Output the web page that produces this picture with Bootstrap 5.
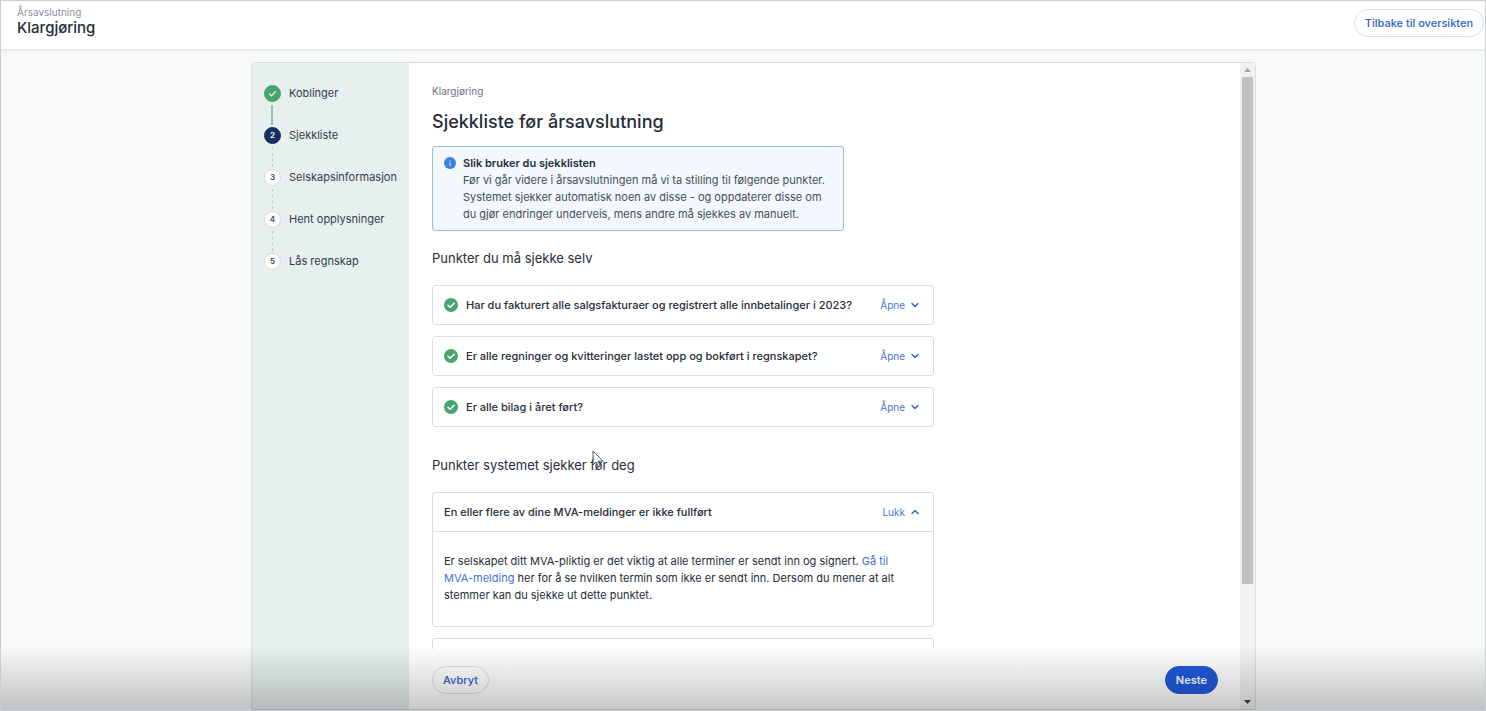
<!DOCTYPE html>
<html lang="nb">
<head>
<meta charset="utf-8">
<meta name="viewport" content="width=device-width, initial-scale=1">
<title>Klargjøring – Årsavslutning</title>
<link href="https://cdn.jsdelivr.net/npm/bootstrap@5.3.0/dist/css/bootstrap.min.css" rel="stylesheet">
<style>
  :root { --ink: #262d38; --line: #dcdfe2; --blue: #2f62c9; --green: #4aa472; }
  body { font-family: Inter, "Liberation Sans", sans-serif; font-size: 11px; line-height: 17px; color: var(--ink); background: #f6f8fa; }
  .app-frame { height: 100vh; border: 1px solid #c9ced1; }
  .topbar { padding: 4px 1px 12px 16px; border-bottom: 2px solid #e9ebee; }
  .topbar-kicker { font-size: 10px; line-height: 15px; color: #8b9199; }
  .topbar h1 { font-size: 15px; line-height: 16px; font-weight: 500; }
  .btn-pill { --bs-btn-font-size: 11px; --bs-btn-font-weight: 500; --bs-btn-line-height: 16px; --bs-btn-padding-y: 5px; --bs-btn-padding-x: 10px; --bs-btn-border-radius: 14px; --bs-btn-border-color: #dfe0e6; --bs-btn-color: var(--blue); }
  .btn-next { --bs-btn-bg: #2159dc; --bs-btn-border-color: #2159dc; --bs-btn-color: #fff; --bs-btn-font-weight: 600; }
  .wizard-wrap { padding: 11px 229px 0 250px; }
  .wizard { border: 1px solid #d9dee1; border-radius: 4px 4px 0 0; }
  .steps { width: 157px; background: #e7f0ef; padding: 22px 0 0 12px; }
  .step { height: 42px; gap: 8px; position: relative; }
  .step-dot { width: 17px; height: 17px; border-radius: 50%; background: #fff; border: 1px solid #d4dbd9; font-size: 8px; line-height: 15px; font-weight: 600; color: #444b52; }
  .step-done .step-dot { background: var(--green); border-color: var(--green); }
  .step-current .step-dot { background: #16305f; border-color: #16305f; color: #fff; }
  .step:not(:last-child)::after { content: ""; position: absolute; left: 8px; top: 20px; height: 20px; border-left: 1px dashed #c6cdcb; }
  .step-done:not(:last-child)::after { border-left: 2px solid #94c5ac; left: 7px; }
  .step-label { color: #353d46; }
  .pane-scroll { padding: 20px 23px 0; flex: 1 1 0; }
  .pane-inner { max-width: 502px; }
  .crumb { font-size: 10px; line-height: 16px; color: #6c727a; }
  .pane-scroll h2 { font-size: 18px; line-height: 24px; font-weight: 500; margin: 11px 0 12px; }
  .info-box { max-width: 412px; border: 1px solid #9dbedc; border-radius: 3px; background: #f2f8fe; padding: 8px 11px 7px; gap: 7px; }
  .info-box p { color: #474e56; }
  .info-box svg { margin-top: 2px; }
  .pane-scroll h3 { font-size: 13px; line-height: 20px; font-weight: 400; margin: 17px 0; }
  .pane-scroll h3.h3-later { margin: 28px 0 17px; }
  .check-card { border: 1px solid var(--line); border-radius: 3px; background: #fff; margin-bottom: 11px; }
  .check-head { height: 38px; padding: 0 14px 0 11px; font-weight: 500; }
  .check-text { padding: 21px 26px 22px 11px; border-top: 1px solid var(--line); }
  .check-text a { color: #3f70d6; }
  .toggle { font-size: 10px; line-height: 16px; color: #4a74d0; gap: 6px; --bs-btn-padding-x: 0; --bs-btn-padding-y: 0; --bs-btn-border-width: 0; }
  .pane-foot { padding: 17px 22px 15px 23px; }
  .rail { width: 15px; background: #f1f1f1; padding: 0 2px; }
  .rail-cap { height: 14px; }
  .rail-thumb { background: #c1c1c1; height: 82%; }
  .shade { height: 64px; background: linear-gradient(rgba(0,0,0,0), rgba(0,0,0,.22)); pointer-events: none; }
  .pointer { left: 160px; top: -5px; }
</style>
</head>
<body>
<svg class="d-none">
  <symbol id="ok" viewBox="0 0 14 14"><circle cx="7" cy="7" r="7" fill="#4aa472"/><path d="M4 7.200l2.100 2.100L10.200 5.200" fill="none" stroke="#fff" stroke-width="1.500" stroke-linecap="round" stroke-linejoin="round"/></symbol>
  <symbol id="down" viewBox="0 0 8 8"><path d="M1 2.500l3 3 3-3" fill="none" stroke="#3562bd" stroke-width="1.400" stroke-linecap="round" stroke-linejoin="round"/></symbol>
  <symbol id="up" viewBox="0 0 8 8"><path d="M1 5.500l3-3 3 3" fill="none" stroke="#3562bd" stroke-width="1.400" stroke-linecap="round" stroke-linejoin="round"/></symbol>
</svg>
<div class="app-frame d-flex flex-column overflow-hidden position-relative">
  <header class="topbar bg-white d-flex justify-content-between align-items-start">
    <div>
      <div class="topbar-kicker">Årsavslutning</div>
      <h1 class="mb-0">Klargjøring</h1>
    </div>
    <button type="button" class="btn btn-pill bg-white mt-1">Tilbake til oversikten</button>
  </header>

  <main class="wizard-wrap flex-grow-1 d-flex overflow-hidden">
    <div class="wizard flex-grow-1 d-flex bg-white overflow-hidden">
      <ol class="steps list-unstyled mb-0 flex-shrink-0">
        <li class="step step-done d-flex align-items-start">
          <span class="step-dot text-center"><svg class="d-block" width="15" height="15" viewBox="0 0 15 15" aria-hidden="true"><path d="M4.500 7.800l2 2 4-4.200" fill="none" stroke="#fff" stroke-width="1.200" stroke-linecap="round" stroke-linejoin="round"/></svg></span>
          <span class="step-label">Koblinger</span></li>
        <li class="step step-current d-flex align-items-start" aria-current="step"><span class="step-dot text-center">2</span><span class="step-label">Sjekkliste</span></li>
        <li class="step d-flex align-items-start"><span class="step-dot text-center">3</span><span class="step-label">Selskapsinformasjon</span></li>
        <li class="step d-flex align-items-start"><span class="step-dot text-center">4</span><span class="step-label">Hent opplysninger</span></li>
        <li class="step d-flex align-items-start"><span class="step-dot text-center">5</span><span class="step-label">Lås regnskap</span></li>
      </ol>

      <section class="flex-grow-1 d-flex flex-column">
        <div class="pane-scroll overflow-hidden">
          <div class="pane-inner">
            <div class="crumb">Klargjøring</div>
            <h2>Sjekkliste før årsavslutning</h2>
            <div class="info-box d-flex align-items-start">
              <svg class="flex-shrink-0" width="12" height="12" viewBox="0 0 12 12" aria-hidden="true"><circle cx="6" cy="6" r="6" fill="#3c82dc"/><path d="M6 5.300v3.400M6 3.200v.8" stroke="#d9e8fa" stroke-width="1.200"/></svg>
              <div>
                <div class="fw-semibold">Slik bruker du sjekklisten</div>
                <p class="mb-0">Før vi går videre i årsavslutningen må vi ta stilling til følgende punkter. Systemet sjekker automatisk noen av disse - og oppdaterer disse om du gjør endringer underveis, mens andre må sjekkes av manuelt.</p>
              </div>
            </div>

            <h3>Punkter du må sjekke selv</h3>
            <div class="check-card"><div class="check-head d-flex align-items-center">
              <svg class="me-2" width="14" height="14"><use href="#ok"/></svg><span>Har du fakturert alle salgsfakturaer og registrert alle innbetalinger i 2023?</span>
              <button type="button" class="btn toggle ms-auto d-flex align-items-center">Åpne<svg width="8" height="8"><use href="#down"/></svg></button></div></div>
            <div class="check-card"><div class="check-head d-flex align-items-center">
              <svg class="me-2" width="14" height="14"><use href="#ok"/></svg><span>Er alle regninger og kvitteringer lastet opp og bokført i regnskapet?</span>
              <button type="button" class="btn toggle ms-auto d-flex align-items-center">Åpne<svg width="8" height="8"><use href="#down"/></svg></button></div></div>
            <div class="check-card"><div class="check-head d-flex align-items-center">
              <svg class="me-2" width="14" height="14"><use href="#ok"/></svg><span>Er alle bilag i året ført?</span>
              <button type="button" class="btn toggle ms-auto d-flex align-items-center">Åpne<svg width="8" height="8"><use href="#down"/></svg></button></div></div>

            <h3 class="h3-later position-relative">Punkter systemet sjekker før deg
              <svg class="pointer position-absolute" width="13" height="19" viewBox="0 0 13 19" aria-hidden="true"><path d="M1 1v14l3-3 2.500 5 2-1-2.300-4.800H11z" fill="#fff" fill-opacity=".6" stroke="#50555c" stroke-linejoin="round"/></svg>
            </h3>
            <div class="check-card">
              <div class="check-head d-flex align-items-center"><span>En eller flere av dine MVA-meldinger er ikke fullført</span>
                <button type="button" class="btn toggle ms-auto d-flex align-items-center">Lukk<svg width="8" height="8"><use href="#up"/></svg></button></div>
              <div class="check-text">Er selskapet ditt MVA-pliktig er det viktig at alle terminer er sendt inn og signert. <a href="#mva" class="text-decoration-none">Gå til MVA-melding</a> her for å se hvilken termin som ikke er sendt inn. Dersom du mener at alt stemmer kan du sjekke ut dette punktet.</div>
            </div>
            <div class="check-card"><div class="check-head"></div></div>
          </div>
        </div>
        <div class="pane-foot d-flex justify-content-between">
          <button type="button" class="btn btn-pill">Avbryt</button>
          <button type="button" class="btn btn-pill btn-next">Neste</button>
        </div>
      </section>

      <div class="rail d-flex flex-column flex-shrink-0" aria-hidden="true">
        <div class="rail-cap d-flex align-items-center justify-content-center"><svg width="7" height="4" viewBox="0 0 7 4"><path d="M0 4l3.500-4L7 4z" fill="#a3a3a3"/></svg></div>
        <div class="flex-grow-1"><div class="rail-thumb"></div></div>
        <div class="rail-cap d-flex align-items-center justify-content-center"><svg width="7" height="4" viewBox="0 0 7 4"><path d="M0 0h7L3.500 4z" fill="#404040"/></svg></div>
      </div>
    </div>
  </main>
  <div class="shade position-absolute bottom-0 start-0 end-0"></div>
</div>
<script src="https://cdn.jsdelivr.net/npm/bootstrap@5.3.0/dist/js/bootstrap.bundle.min.js"></script>
</body>
</html>
